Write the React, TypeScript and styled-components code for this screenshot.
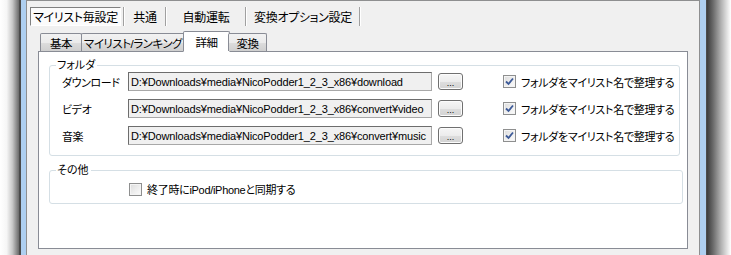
import React from 'react';
import styled, { createGlobalStyle } from 'styled-components';

const GlobalStyle = createGlobalStyle`
	html, body {
		margin: 0;
		padding: 0;
		background: #ffffff;
	}
	body {
		font-family: 'Liberation Sans', 'Noto Sans CJK JP', sans-serif;
		font-size: 12px;
		color: #000000;
		font-feature-settings: 'palt';
	}
`;

const folders = [
	{ label: 'ダウンロード', path: 'D:¥Downloads¥media¥NicoPodder1_2_3_x86¥download' },
	{ label: 'ビデオ', path: 'D:¥Downloads¥media¥NicoPodder1_2_3_x86¥convert¥video' },
	{ label: '音楽', path: 'D:¥Downloads¥media¥NicoPodder1_2_3_x86¥convert¥music' },
];

const topTabs = [
	{ label: 'マイリスト毎設定', width: 91 },
	{ label: '共通', width: 40 },
	{ label: '自動運転', width: 78 },
	{ label: '変換オプション設定', width: 112 },
];

const subTabs = [
	{ label: '基本', width: 42 },
	{ label: 'マイリスト/ランキング', width: 104 },
	{ label: '詳細', width: 47 },
	{ label: '変換', width: 39 },
];

const CheckBox = ({ checked }: { checked: boolean }) => (
	<Box>
		{checked && (
			<svg width="9" height="9" viewBox="0 0 9 9">
				<path d="M1 4.5 L3.5 7 L8 1.5" fill="none" stroke="#3d5a98" strokeWidth="1.8" />
			</svg>
		)}
	</Box>
);

const App = () => {
	return (
		<>
			<GlobalStyle />
			<Screen>
				<ShadowLeft />
				<Window>
					<Client>
						<TopBar>
							{topTabs.map((t, i) => (
								<React.Fragment key={t.label}>
									<TopButton $active={i === 0} $w={t.width}>
										{t.label}
									</TopButton>
									<Separator />
								</React.Fragment>
							))}
						</TopBar>
						<TabArea>
							<TabStrip>
								{subTabs.map((t) => (
									<Tab key={t.label} $active={t.label === '詳細'} $w={t.width}>
										{t.label}
									</Tab>
								))}
							</TabStrip>
							<Panel>
								<Group $right={7} $bottom={10}>
									<Legend>フォルダ</Legend>
									<FolderList>
										{folders.map((f) => (
											<FolderRow key={f.label}>
												<RowLabel>{f.label}</RowLabel>
												<PathBox>{f.path}</PathBox>
												<BrowseButton>...</BrowseButton>
												<CheckLabel $indent={40}>
													<CheckBox checked />
													フォルダをマイリスト名で整理する
												</CheckLabel>
											</FolderRow>
										))}
									</FolderList>
								</Group>
								<Group $right={4} $bottom={6}>
									<Legend>その他</Legend>
									<OtherRow>
										<CheckLabel $indent={0}>
											<CheckBox checked={false} />
											終了時にiPod/iPhoneと同期する
										</CheckLabel>
									</OtherRow>
								</Group>
							</Panel>
						</TabArea>
					</Client>
				</Window>
				<ShadowRight />
			</Screen>
		</>
	);
};

export default App;

const Screen = styled.div`
	display: flex;
	width: 731px;
	height: 255px;
	overflow: hidden;
`;

const ShadowLeft = styled.div`
	width: 19px;
	flex-shrink: 0;
	background: linear-gradient(to right, #ffffff 0%, #f6f6f6 35%, #c8c8c8 65%, #6a6a6a 100%);
`;

const ShadowRight = styled.div`
	width: 24px;
	flex-shrink: 0;
	background: linear-gradient(to right, #3c3c3c 0%, #6a6a6a 25%, #b4b4b4 60%, #eeeeee 90%, #ffffff 100%);
`;

const Window = styled.div`
	display: flex;
	width: 688px;
	flex-shrink: 0;
	border-left: 2px solid #4b4b4b;
	border-right: 1px solid #4b4b4b;
	background: #aecff0;
	padding: 0 6px 0 5px;
	box-sizing: border-box;
`;

const Client = styled.div`
	flex: 1;
	min-width: 0;
	overflow: hidden;
	display: flex;
	flex-direction: column;
	background: #f0f0f0;
	border: 1px solid #8e8f90;
	border-bottom: none;
`;

const TopBar = styled.div`
	display: flex;
	align-items: center;
	height: 19px;
	padding: 6px 0 0 3px;
`;

const TopButton = styled.div<{ $active?: boolean; $w: number }>`
	width: ${({ $w }) => $w}px;
	height: 19px;
	box-sizing: border-box;
	display: flex;
	align-items: center;
	justify-content: center;
	margin-right: ${({ $active }) => ($active ? '2px' : '0')};
	background: ${({ $active }) => ($active ? '#fbfbfb' : 'transparent')};
	border: 1px solid transparent;
	border-color: ${({ $active }) => ($active ? '#808080 #ffffff #ffffff #808080' : 'transparent')};
	white-space: nowrap;
	letter-spacing: -0.3px;
`;

const Separator = styled.div`
	width: 1px;
	height: 19px;
	background: #a0a0a0;
	border-right: 1px solid #ffffff;
`;

const TabArea = styled.div`
	display: flex;
	flex-direction: column;
	margin: 4px 11px 0 11px;
`;

const TabStrip = styled.div`
	display: flex;
	align-items: flex-end;
	height: 21px;
	padding-left: 2px;
	position: relative;
	z-index: 1;
`;

const Tab = styled.div<{ $active?: boolean; $w: number }>`
	width: ${({ $w }) => $w}px;
	height: ${({ $active }) => ($active ? '21px' : '18px')};
	box-sizing: border-box;
	display: flex;
	justify-content: center;
	align-items: ${({ $active }) => ($active ? 'flex-start' : 'center')};
	padding-top: ${({ $active }) => ($active ? '2px' : '1px')};
	margin: ${({ $active }) => ($active ? '0 -1px -1px -2px' : '0 0 0 -1px')};
	border: 1px solid #898c95;
	border-bottom: ${({ $active }) => ($active ? '1px solid #ffffff' : 'none')};
	background: ${({ $active }) =>
		$active ? '#ffffff' : 'linear-gradient(to bottom, #f2f2f2 0%, #ebebeb 50%, #dddddd 51%, #cfcfcf 100%)'};
	border-radius: 2px 2px 0 0;
	white-space: nowrap;
	font-size: 11.5px;
	letter-spacing: -0.5px;
	&:first-child {
		margin-left: 0;
	}
`;

const Panel = styled.div`
	height: 198px;
	box-sizing: border-box;
	background: #ffffff;
	border: 1px solid #898c95;
	padding: 6px 0 0 10px;
	display: flex;
	flex-direction: column;
	gap: 7px;
`;

const Group = styled.fieldset<{ $right: number; $bottom: number }>`
	margin: 0 ${({ $right }) => $right}px 0 0;
	padding: 0 0 ${({ $bottom }) => $bottom}px 0;
	border: 1px solid #d5dfe5;
	border-radius: 3px;
	min-width: 0;
`;

const Legend = styled.legend`
	margin-left: 6px;
	padding: 0 2px 0 1px;
	line-height: 14px;
	font-size: 11px;
`;

const FolderList = styled.div`
	display: flex;
	flex-direction: column;
	gap: 8px;
	padding-left: 12px;
`;

const FolderRow = styled.div`
	display: flex;
	align-items: center;
	height: 19px;
`;

const RowLabel = styled.div`
	width: 66px;
	flex-shrink: 0;
	white-space: nowrap;
	font-size: 11px;
	letter-spacing: -0.4px;
`;

const PathBox = styled.div`
	width: 304px;
	height: 19px;
	flex-shrink: 0;
	box-sizing: border-box;
	background: #f0f0f0;
	border: 1px solid;
	border-color: #6d6d6d #a8a8a8 #a8a8a8 #6d6d6d;
	padding: 0 1px 0 2px;
	display: flex;
	align-items: center;
	white-space: nowrap;
	overflow: hidden;
	font-size: 11px;
	letter-spacing: -0.15px;
`;

const BrowseButton = styled.div`
	width: 25px;
	height: 17px;
	margin-left: 6px;
	flex-shrink: 0;
	box-sizing: border-box;
	border: 1px solid #707070;
	border-radius: 3px;
	background: linear-gradient(to bottom, #f6f6f6 0%, #ececec 50%, #dedede 51%, #d2d2d2 100%);
	box-shadow: inset 0 0 0 1px #fcfcfc;
	display: flex;
	justify-content: center;
	align-items: flex-end;
	font-size: 9px;
	line-height: 12px;
`;

const CheckLabel = styled.label<{ $indent: number }>`
	display: flex;
	align-items: center;
	gap: 5px;
	margin-left: ${({ $indent }) => $indent}px;
	white-space: nowrap;
	font-size: 11px;
	letter-spacing: -0.3px;
`;

const Box = styled.span`
	width: 13px;
	height: 13px;
	flex-shrink: 0;
	box-sizing: border-box;
	border: 1px solid #8e8f8f;
	background: linear-gradient(135deg, #dcdcdc 0%, #f0f0f0 60%, #fbfbfb 100%);
	box-shadow: inset 0 0 0 1px #f4f4f4;
	display: flex;
	align-items: center;
	justify-content: center;
`;

const OtherRow = styled.div`
	display: flex;
	padding: 4px 0 0 79px;
`;
